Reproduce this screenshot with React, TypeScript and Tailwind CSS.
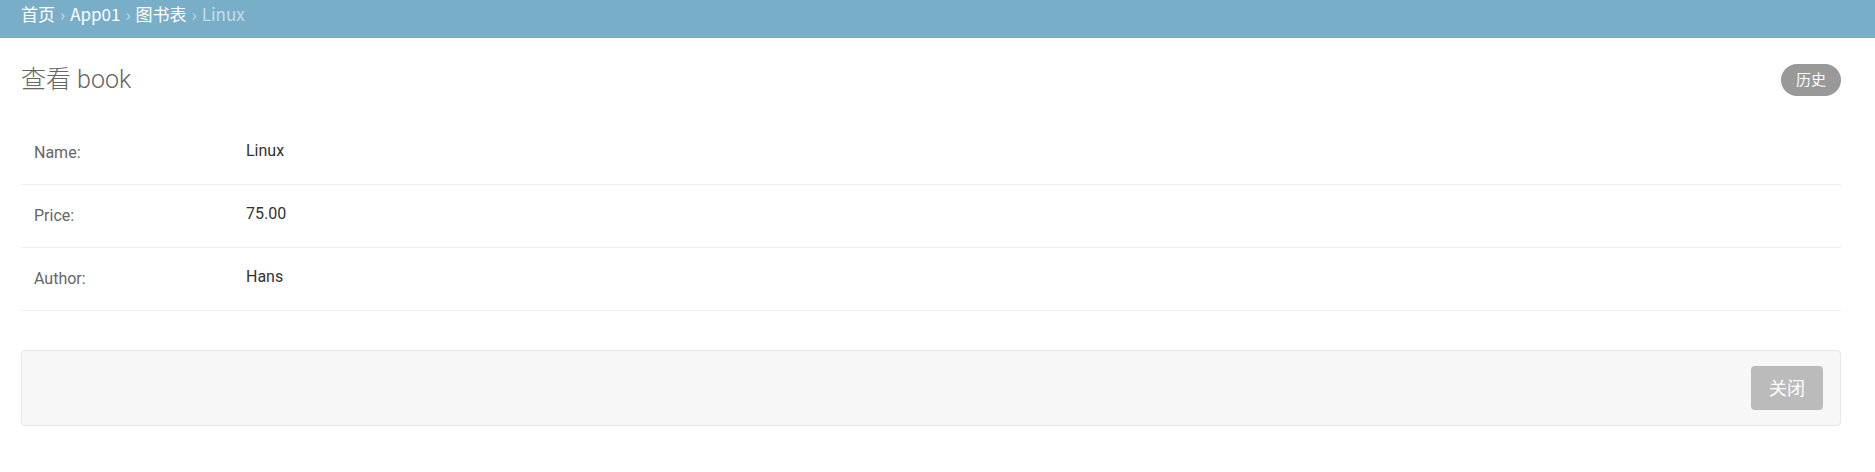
import React from "react";

const font = { fontFamily: 'Roboto, "Noto Sans CJK SC", sans-serif' };

function Row({ label, value }: { label: string; value: string }) {
  return (
    <div className="flex h-[63px] border-b border-[#eeeeee]">
      <div className="w-[225px] pl-[13px] pt-[19px] text-[16px] leading-[24px] text-[#666666]">{label}</div>
      <div className="pt-[17px] text-[16px] leading-[24px] text-[#333333]">{value}</div>
    </div>
  );
}

export default function App() {
  return (
    <div className="min-h-[472px] bg-white" style={font}>
      <div className="h-[38px] bg-[#79aec8] pl-[21px] text-[17px] leading-[28px] text-[#c4dce8] [font-family:'Noto_Sans_CJK_SC',sans-serif]">
        <span className="text-white">首页</span>
        <span className="mx-[5px]">›</span>
        <span className="text-white">App01</span>
        <span className="mx-[5px]">›</span>
        <span className="text-white">图书表</span>
        <span className="mx-[5px]">›</span>
        <span>Linux</span>
      </div>
      <div className="pl-[21px] pr-[34px]">
        <div className="flex h-[84px] items-center justify-between">
          <h1 className="text-[25px] font-light leading-[32px] text-[#666666]">查看 book</h1>
          <button className="h-[32px] rounded-full bg-[#999999] px-[15px] text-[15px] leading-[32px] text-white">历史</button>
        </div>
        <div>
          <Row label="Name:" value="Linux" />
          <Row label="Price:" value="75.00" />
          <Row label="Author:" value="Hans" />
        </div>
        <div className="mt-[39px] flex h-[76px] items-center justify-end rounded-[4px] border border-[#e8e8e8] bg-[#f7f7f7] pr-[17px]">
          <button className="h-[44px] w-[72px] rounded-[4px] bg-[#bbbbbb] text-[18px] text-white">关闭</button>
        </div>
      </div>
    </div>
  );
}
